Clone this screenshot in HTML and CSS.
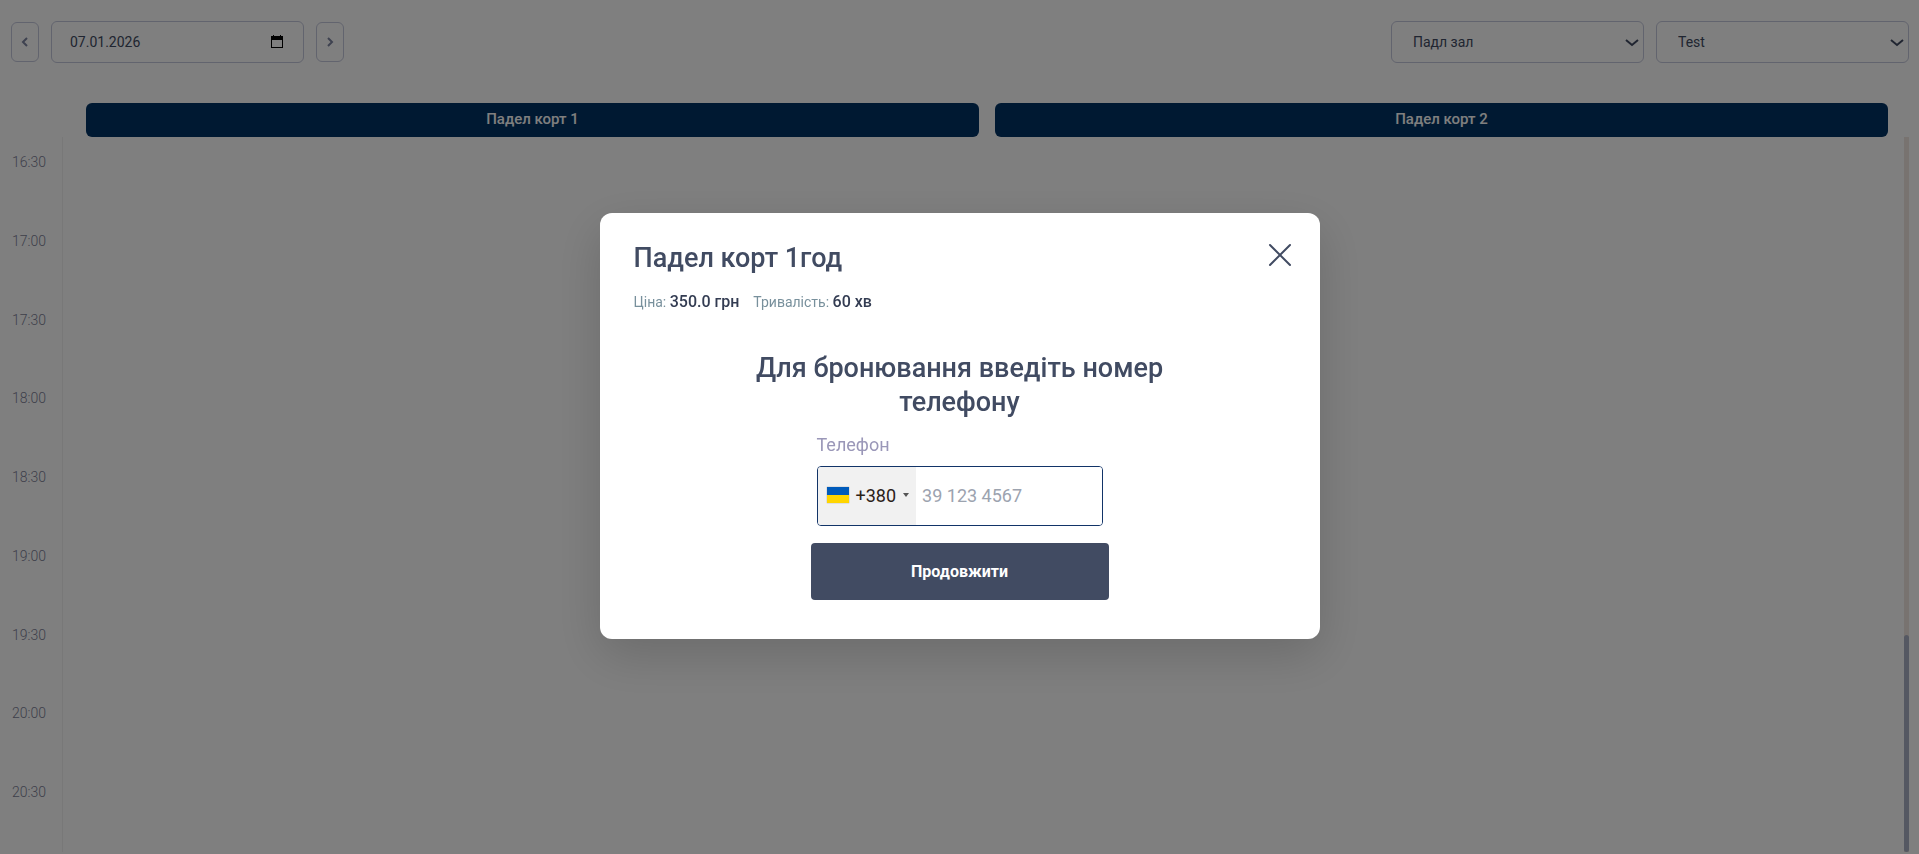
FILE: index.html
```html
<!DOCTYPE html>
<html lang="uk">
<head>
    <meta charset="UTF-8">
    <meta name="viewport" content="width=device-width, initial-scale=1">
    <title>Бронювання</title>
    <link rel="stylesheet" href="styles.css">
</head>
<body>
<div class="page">
    <header class="toolbar">
        <div class="date-nav">
            <button class="nav-btn" type="button" aria-label="Попередній день">
                <svg width="8" height="12" viewBox="0 0 8 12"><path d="M6 2 2 6l4 4"/></svg>
            </button>
            <div class="date-field">
                <input class="date-input" type="text" value="07.01.2026" aria-label="Дата">
                <button class="date-picker" type="button" aria-label="Календар">
                    <svg width="12" height="14" viewBox="0 0 12 14">
                        <path d="M2 0h1v1h6V0h1v1h2v12H0V1h2zM1 5v7h10V5z" fill-rule="evenodd"/>
                    </svg>
                </button>
            </div>
            <button class="nav-btn" type="button" aria-label="Наступний день">
                <svg width="8" height="12" viewBox="0 0 8 12"><path d="m2 2 4 4-4 4"/></svg>
            </button>
        </div>
        <div class="filters">
            <div class="select-wrap">
                <select class="select" aria-label="Зал">
                    <option>Падл зал</option>
                </select>
                <svg class="select-arrow" width="14" height="10" viewBox="0 0 14 10"><path d="m1 2 6 5 6-5"/></svg>
            </div>
            <div class="select-wrap">
                <select class="select" aria-label="Послуга">
                    <option>Test</option>
                </select>
                <svg class="select-arrow" width="14" height="10" viewBox="0 0 14 10"><path d="m1 2 6 5 6-5"/></svg>
            </div>
        </div>
    </header>

    <div class="courts">
        <div class="court">Падел корт 1</div>
        <div class="court">Падел корт 2</div>
    </div>

    <main class="schedule">
        <div class="times">
            <div class="time">16:30</div>
            <div class="time">17:00</div>
            <div class="time">17:30</div>
            <div class="time">18:00</div>
            <div class="time">18:30</div>
            <div class="time">19:00</div>
            <div class="time">19:30</div>
            <div class="time">20:00</div>
            <div class="time">20:30</div>
        </div>
        <div class="scrollbar">
            <div class="scrollbar-thumb"></div>
        </div>
    </main>
</div>

<div class="overlay">
    <div class="modal" role="dialog" aria-labelledby="modal-title">
        <div class="modal-head">
            <h2 class="modal-title" id="modal-title">Падел корт 1год</h2>
            <button class="close" type="button" aria-label="Закрити">
                <svg width="24" height="24" viewBox="0 0 24 24"><path d="m2 2 20 20M22 2 2 22"/></svg>
            </button>
        </div>
        <div class="info">
            <div class="info-item">Ціна: <b>350.0 грн</b></div>
            <div class="info-item">Тривалість: <b>60 хв</b></div>
        </div>
        <form class="form">
            <h2 class="form-title">Для бронювання введіть номер телефону</h2>
            <div class="field">
                <label class="label" for="phone">Телефон</label>
                <div class="phone">
                    <button class="country" type="button">
                        <span class="flag"></span>
                        <span>+380</span>
                        <span class="caret"></span>
                    </button>
                    <input class="phone-input" id="phone" type="tel" placeholder="39 123 4567">
                </div>
            </div>
            <button class="submit" type="button">Продовжити</button>
        </form>
    </div>
</div>
</body>
</html>
```
FILE: styles.css
```css
* {
    box-sizing: border-box;
}
body {
    margin: 0;
    font-family: Roboto, "Noto Sans", sans-serif;
    font-size: 14px;
    color: #414b62;
    background: #fff;
}
button, input, select {
    font: inherit;
    color: inherit;
}
button {
    padding: 0;
    border: 0;
    background: none;
    cursor: pointer;
}
h2 {
    margin: 0;
    font-size: 27px;
    line-height: 34px;
    font-weight: 500;
}

/* page */
.page {
    display: flex;
    flex-direction: column;
    height: 100vh;
    padding: 21px 10px 2px;
    overflow: hidden;
}
.toolbar {
    display: flex;
    justify-content: space-between;
    align-items: flex-start;
}
.date-nav, .filters {
    display: flex;
    align-items: center;
    gap: 12px;
}
.date-nav {
    padding-left: 1px;
}
.nav-btn {
    display: flex;
    align-items: center;
    justify-content: center;
    width: 28px;
    height: 40px;
    border: 1px solid #c4c8dc;
    border-radius: 6px;
}
.nav-btn svg, .select-arrow {
    fill: none;
    stroke: #7c84a0;
    stroke-width: 2;
}
.date-field {
    display: flex;
    align-items: center;
    width: 253px;
    height: 42px;
    padding: 0 20px 0 18px;
    border: 1px solid #c4c8dc;
    border-radius: 6px;
}
.date-input {
    flex: 1;
    min-width: 0;
    padding: 0;
    border: 0;
    outline: none;
    background: none;
}
.date-picker svg {
    display: block;
    fill: #000;
}
.select-wrap {
    position: relative;
    width: 253px;
}
.select {
    appearance: none;
    display: block;
    width: 100%;
    height: 42px;
    padding: 0 30px 0 21px;
    border: 1px solid #c4c8dc;
    border-radius: 6px;
    background: none;
}
.select-arrow {
    position: absolute;
    top: 17px;
    right: 5px;
    stroke: #414b62;
    pointer-events: none;
}

/* courts */
.courts {
    display: grid;
    grid-template-columns: 1fr 1fr;
    gap: 16px;
    margin-top: 40px;
    padding: 0 21px 0 76px;
}
.court {
    height: 34px;
    border-radius: 6px;
    background: #003264;
    color: #fff;
    font-size: 15px;
    font-weight: 500;
    line-height: 32px;
    text-align: center;
}

/* schedule */
.schedule {
    flex: 1;
    display: flex;
    justify-content: space-between;
}
.times {
    display: grid;
    grid-auto-rows: 1fr;
    width: 53px;
    padding: 0 0 6px 2px;
    border-right: 1px solid #f0f0f0;
}
.time {
    padding-top: 16px;
    color: #7c7f96;
    font-weight: 300;
    line-height: 18px;
}
.scrollbar {
    display: flex;
    align-items: flex-end;
    width: 5px;
    background: #f1e7e1;
}
.scrollbar-thumb {
    width: 100%;
    height: 217px;
    border-radius: 3px;
    background: #abb1c4;
}

/* modal */
.overlay {
    position: fixed;
    inset: 0;
    display: flex;
    align-items: center;
    justify-content: center;
    padding-bottom: 2px;
    background: rgba(0, 0, 0, .5);
}
.modal {
    width: 720px;
    padding: 28px 28px 39px 34px;
    border-radius: 12px;
    background: #fff;
    box-shadow: 0 16px 48px rgba(0, 0, 0, .16);
}
.modal-head {
    display: flex;
    justify-content: space-between;
    align-items: flex-start;
}
.close {
    padding-top: 2px;
}
.close svg {
    display: block;
    fill: none;
    stroke: #414b62;
    stroke-width: 2;
    stroke-linecap: round;
}
.info {
    display: flex;
    gap: 14px;
    margin-top: 15px;
    line-height: 24px;
}
.info-item {
    color: #78909c;
}
.info-item b {
    color: #333c52;
    font-size: 16px;
    font-weight: 500;
}
.form {
    display: flex;
    flex-direction: column;
    align-items: center;
    margin-top: 37px;
    padding-right: 6px;
}
.form-title {
    max-width: 440px;
    text-align: center;
}
.field {
    width: 286px;
    margin-top: 13px;
}
.label {
    display: block;
    color: #9a97b8;
    font-size: 18px;
    line-height: 26px;
}
.phone {
    display: flex;
    height: 60px;
    margin-top: 8px;
    border: 1px solid #123468;
    border-radius: 4px;
    overflow: hidden;
    font-size: 18px;
}
.country {
    display: flex;
    align-items: center;
    gap: 7px;
    padding: 0 7px 2px 9px;
    background: #f1f1f1;
    color: #2b2118;
}
.flag {
    width: 22px;
    height: 16px;
    background: linear-gradient(#005bbb 50%, #ffd500 50%);
    box-shadow: 0 0 1px #888;
}
.caret {
    border: 3px solid transparent;
    border-top: 4px solid #555;
    border-bottom: 0;
}
.phone-input {
    flex: 1;
    min-width: 0;
    padding: 0 6px 2px;
    border: 0;
    outline: none;
}
.phone-input::placeholder {
    color: #9ca3af;
}
.submit {
    width: 298px;
    height: 57px;
    margin-top: 17px;
    border-radius: 4px;
    background: #414b62;
    color: #fff;
    font-size: 16px;
    font-weight: 700;
}
```
